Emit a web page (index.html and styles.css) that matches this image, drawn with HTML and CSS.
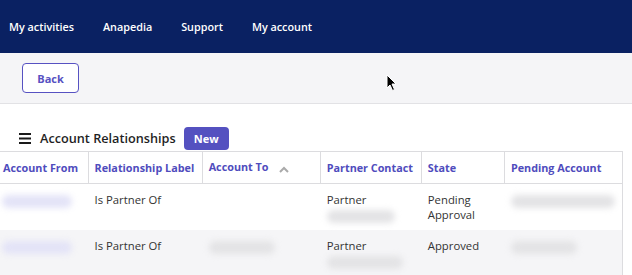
FILE: index.html
```html
<!DOCTYPE html>
<html lang="en">

<head>
    <meta charset="UTF-8">
    <meta name="viewport" content="width=device-width, initial-scale=1.0">
    <title>Account Relationships</title>
    <link rel="stylesheet" href="styles.css">
</head>

<body>
    <header class="top-nav">
        <a href="#">My activities</a>
        <a href="#">Anapedia</a>
        <a href="#">Support</a>
        <a href="#">My account</a>
    </header>

    <div class="toolbar">
        <button class="back-button">Back</button>
    </div>

    <main>
        <div class="section-title">
            <span class="menu-icon">
                <svg width="12" height="11" viewBox="0 0 12 11">
                    <rect x="0" y="0" width="12" height="2" fill="#1a1a1a"/>
                    <rect x="0" y="4.5" width="12" height="2" fill="#1a1a1a"/>
                    <rect x="0" y="9" width="12" height="2" fill="#1a1a1a"/>
                </svg>
            </span>
            <h2>Account Relationships</h2>
            <button class="new-button">New</button>
        </div>

        <table class="rel-table">
            <colgroup>
                <col style="width: 88px">
                <col style="width: 114px">
                <col style="width: 118px">
                <col style="width: 101px">
                <col style="width: 83px">
                <col style="width: 118px">
            </colgroup>
            <thead>
                <tr>
                    <th>Account From</th>
                    <th>Relationship Label</th>
                    <th>Account To <span class="sort-caret">
                        <svg width="10" height="7" viewBox="0 0 10 7"><path d="M1 6 L5 2 L9 6" fill="none" stroke="#aaa" stroke-width="2"/></svg>
                    </span></th>
                    <th>Partner Contact</th>
                    <th>State</th>
                    <th>Pending Account</th>
                </tr>
            </thead>
            <tbody>
                <tr>
                    <td><span class="blur blur-link" style="width: 70px"></span></td>
                    <td>Is Partner Of</td>
                    <td></td>
                    <td>Partner<br><span class="blur" style="width: 68px"></span></td>
                    <td>Pending<br>Approval</td>
                    <td><span class="blur" style="width: 104px"></span></td>
                </tr>
                <tr class="alt">
                    <td><span class="blur blur-link" style="width: 70px"></span></td>
                    <td>Is Partner Of</td>
                    <td><span class="blur" style="width: 66px"></span></td>
                    <td>Partner<br><span class="blur" style="width: 76px"></span></td>
                    <td>Approved</td>
                    <td><span class="blur" style="width: 66px"></span></td>
                </tr>
            </tbody>
        </table>
    </main>

    <div class="cursor">
        <svg width="12" height="18" viewBox="0 0 12 18">
            <path d="M1 1 L1 14 L4 11 L6.5 16.5 L8.5 15.5 L6 10 L10 10 Z" fill="#000" stroke="#fff" stroke-width="1"/>
        </svg>
    </div>
</body>

</html>
```

FILE: styles.css
```css
body {
    font-family: "Open Sans", Arial, sans-serif;
    margin: 0;
    padding: 0;
    background-color: white;
    color: #2a2a2a;
    position: relative;
    overflow: hidden;
}

.top-nav {
    background-color: #0a2162;
    height: 53px;
    display: flex;
    align-items: center;
    gap: 29px;
    padding: 0 9px;
}

.top-nav a {
    color: white;
    text-decoration: none;
    font-size: 10.8px;
    font-weight: 600;
}

.toolbar {
    background-color: #f5f5f7;
    border-bottom: 1px solid #e2e2e5;
    height: 50px;
    display: flex;
    align-items: center;
    padding-left: 22px;
}

.back-button {
    background-color: white;
    border: 1px solid #5752c2;
    color: #5752c2;
    border-radius: 4px;
    width: 57px;
    height: 30px;
    font-family: inherit;
    font-size: 11px;
    font-weight: 700;
    cursor: pointer;
}

.section-title {
    display: flex;
    align-items: center;
    height: 24px;
    margin-top: 22px;
    padding-left: 19px;
}

.menu-icon {
    display: flex;
    margin-right: 9px;
}

.section-title h2 {
    font-size: 12.7px;
    font-weight: 600;
    color: #1f1f1f;
    margin: 0 8px 0 0;
}

.new-button {
    background-color: #5451c0;
    color: white;
    border: none;
    border-radius: 4px;
    width: 45px;
    height: 23px;
    font-family: inherit;
    font-size: 11px;
    font-weight: 700;
    cursor: pointer;
}

.rel-table {
    border-collapse: collapse;
    table-layout: fixed;
    width: 623px;
    margin-top: 1px;
    font-size: 11.3px;
}

.rel-table th {
    color: #4f4cbd;
    font-size: 10.8px;
    font-weight: 700;
    text-align: left;
    height: 31px;
    padding: 0 6px;
    border: 1px solid #dcdcdf;
    border-left: none;
    white-space: nowrap;
    overflow: hidden;
}

.rel-table th:first-child {
    padding-left: 3px;
}

.rel-table th:last-child {
    border-right: 1px solid #dcdcdf;
}

.sort-caret {
    margin-left: 8px;
    vertical-align: middle;
}

.rel-table td {
    vertical-align: top;
    padding: 8px 6px 0;
    height: 38px;
    line-height: 15px;
    color: #333;
    border-right: 1px solid transparent;
}

.rel-table td:first-child {
    padding-left: 2px;
}

.rel-table td:last-child {
    border-right: 1px solid #dcdcdf;
}

.rel-table tr.alt td {
    background-color: #f5f5f7;
}

.blur {
    display: inline-block;
    height: 13px;
    background-color: #e3e3e5;
    border-radius: 7px;
    filter: blur(3px);
    vertical-align: middle;
    margin-top: 2px;
}

.blur-link {
    background-color: #e3e3f7;
}

.cursor {
    position: absolute;
    left: 386px;
    top: 74px;
}
```
